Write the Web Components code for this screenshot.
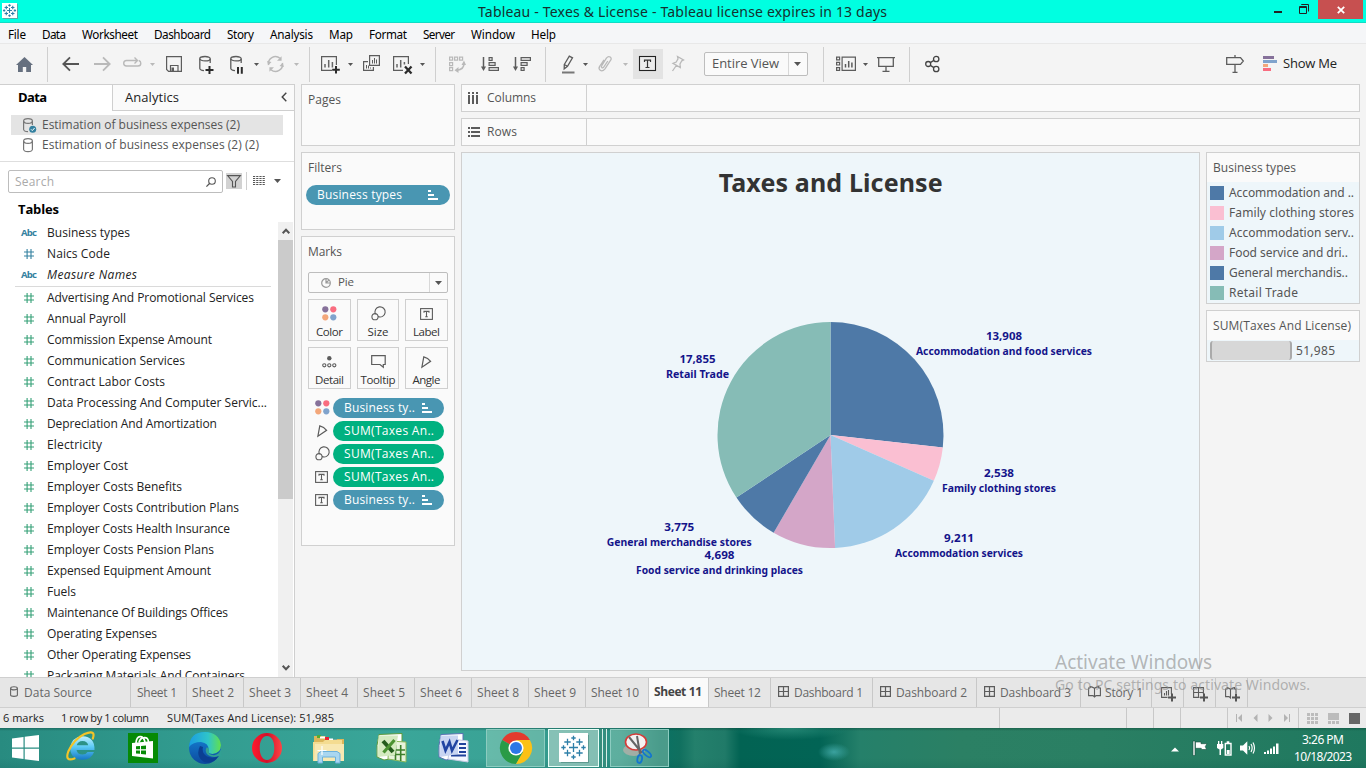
<!DOCTYPE html>
<html lang="en">
<head>
<meta charset="utf-8">
<title>Tableau - Texes &amp; License</title>
<style>
html,body{margin:0;padding:0;width:1366px;height:768px;overflow:hidden;background:#f4f4f4}
body{font-family:"Open Sans","Noto Sans",sans-serif;font-size:12px;color:#333}
</style>
</head>
<body>
<app-window></app-window>
<script>
function component(tag, css, render) {
  customElements.define(tag, class extends HTMLElement {
    connectedCallback() {
      if (this.shadowRoot) return;
      const root = this.attachShadow({mode: 'open'});
      const t = document.createElement('template');
      t.innerHTML = `<style>*{box-sizing:border-box}:host{display:block;box-sizing:border-box}${css}</style>${render(this)}`;
      root.appendChild(t.content.cloneNode(true));
    }
  });
}

/* Single line of text tracked to a given run length. */
customElements.define('ui-text', class extends HTMLElement {
  connectedCallback() {
    if (this.shadowRoot) return;
    const root = this.attachShadow({mode: 'open'});
    root.innerHTML = '<style>:host{display:inline-block;white-space:nowrap;flex:none;line-height:1.3}</style><slot></slot>';
    const w = +this.getAttribute('w'), s = this.getAttribute('s');
    if (s) this.style.fontSize = s + 'px';
    if (w) {
      const n = this.textContent.length, now = this.getBoundingClientRect().width;
      this.style.letterSpacing = ((w - now) / Math.max(1, n - 1)).toFixed(3) + 'px';
      this.style.width = w + 'px';
    }
  }
});
const T = (text, w, s = 12, extra = '') => `<ui-text w="${w}" s="${s}" style="${extra}">${text}</ui-text>`;

const dots = '<circle cx="3.3" cy="3.3" r="3.1" fill="#86719a"/><circle cx="11.3" cy="3.3" r="3.1" fill="#f96d80"/><circle cx="3.3" cy="11.3" r="3.1" fill="#f3a77a"/><circle cx="11.3" cy="11.3" r="3.1" fill="#80a3cc"/>';
const G = '#5c5c5c', L = '#b9b9b9';
const st = (c, w = 1.2) => `fill="none" stroke="${c}" stroke-width="${w}"`;
const cyl = (c) => `<g ${st(c, 1.3)}><ellipse cx="6" cy="4.7" rx="5.2" ry="2.2"/><path d="M.8 4.7V14.5Q1 16.3 5 16.6M11.2 4.7V9"/></g>`;
const logo = (c) => {
  const p = (x, y, r) => `M${x - r} ${y}H${x + r}M${x} ${y - r}V${y + r}`;
  return `<path fill="none" stroke="${c}" stroke-width="1" d="${p(13,13,4.5)}${p(13,3.5,2.2)}${p(13,22.5,2.2)}${p(3,13,2.2)}${p(23,13,2.2)}${p(7,7.5,3.2)}${p(19,7.5,3.2)}${p(7,18.5,3.2)}${p(19,18.5,3.2)}"/>`;
};
const ICONS = {
  home: [17,20,'<path fill="#66707f" d="M8.5 3L17 11H15V18H10.2V13H6.8V18H2V11H0Z"/>'],
  back: [17,20,`<path ${st('#555',1.8)} d="M17 10H1.5M8 3.3L1.3 10L8 16.7"/>`],
  fwd: [17,20,`<path ${st(L,1.8)} d="M0 10H15.5M9 3.3L15.7 10L9 16.7"/>`],
  loop: [19,20,`<path ${st(L,1.4)} d="M9 6.5H3.5Q.7 6.5 .7 9.2T3.5 12H15Q17.8 12 17.8 9.2Q17.8 7 15.8 6.5M9 6.5H14M11.5 3.5L14.5 6.5L11.5 9.5"/>`],
  caret: [5,20,'<path fill="#555" d="M0 9H5L2.5 12Z"/>'],
  caretL: [5,20,`<path fill="${L}" d="M0 9H5L2.5 12Z"/>`],
  save: [16,20,`<path ${st(G,1.2)} d="M.6 2.6H15.4V17.4H2.6L.6 15.4ZM4.5 17V11.5H12V17"/><path fill="${G}" d="M5.5 13.5h2.5v3.5H5.5z"/>`],
  cyladd: [15,20,cyl(G)+'<path stroke="#2b2b2b" stroke-width="2" d="M10.5 12V20M6.5 16H14.5"/>'],
  cylpause: [13,20,cyl(G)+'<path stroke="#2b2b2b" stroke-width="2" d="M8 13V19.7M11.8 13V19.7"/>'],
  refresh: [17,20,`<path ${st(L,1.5)} d="M1.6 11A7 7 0 0 1 13 4.3M15.4 9A7 7 0 0 1 4 15.7"/><path fill="${L}" d="M10 6.8H14.6V2.3ZM7 13.2H2.4V17.7ZM0 7L1.5 11L4.5 8ZM17 13L15.5 9L12.5 12Z"/>`],
  sheetadd: [19,20,`<path ${st(G)} d="M15.4 11V2.6H.6V16.4H11"/><path stroke="#666" stroke-width="1.5" d="M4 13.5V10M7.7 13.5V6M11.4 13.5V8"/><path stroke="#2b2b2b" stroke-width="2" d="M15 12V19.6M11.2 15.8H18.8"/>`],
  dup: [17,20,`<path ${st(G)} d="M6.6 1.6H16.4V11.4H6.6ZM5 7.6H.6V16.4H10.4V13"/><path stroke="${G}" d="M9.5 9.5V6M11.5 9.5V4M13.5 9.5V5.5M3.5 14.5V11M5.5 14.5V11.5M7.5 14.5V13.5"/>`],
  clear: [20,20,`<path ${st(G)} d="M15.4 10V2.6H.6V16.4H10"/><path stroke="#666" stroke-width="1.5" d="M4 13.5V10M7.7 13.5V6M11.4 10.5V8"/><path stroke="#2b2b2b" stroke-width="2.3" d="M12 12.5L18.5 19.5M18.5 12.5L12 19.5"/>`],
  swap: [17,20,`<path ${st(L)} d="M.6 3.1h3v3h-3zM5.6 3.1h3v3h-3zM10.6 3.1h3v3h-3zM.6 8.6h3v3h-3zM.6 13.6h3v3h-3z"/><path ${st(L,1.6)} d="M15 9.5Q15 15.5 8 16.2"/><path fill="${L}" d="M15 6.5L17 11H12.5ZM5.5 16.3L9.5 13V19Z"/>`],
  asc: [18,20,`<path stroke="${G}" stroke-width="1.5" d="M2.5 3V14"/><path fill="${G}" d="M0 12.5H5L2.5 17Z"/><path ${st(G)} d="M8.1 3.6h3v2.8h-3zM8.1 8.6h6v2.8h-6zM8.1 13.6h9.3v2.8H8.1z"/>`],
  desc: [18,20,`<path stroke="${G}" stroke-width="1.5" d="M2.5 3V14"/><path fill="${G}" d="M0 12.5H5L2.5 17Z"/><path ${st(G)} d="M8.1 3.6h9.3v2.8H8.1zM8.1 8.6h6v2.8h-6zM8.1 13.6h3v2.8h-3z"/>`],
  pen: [14,20,`<path ${st(G,1.3)} d="M3.3 10.5L8.3 2.2L11.5 3.8L6.5 12.3L3.2 14.8ZM3.3 10.5L6.5 12.3"/><path fill="#777" d="M1 17.5h12.5v2H1z"/>`],
  clip: [14,20,`<path ${st(L,1.3)} d="M9.8 7L5.7 13.2Q4.6 14.5 3.8 13.6T3.9 11.3L8.4 4.2Q10.3 1.7 12.2 3.1T12.3 6.6L7 14.8Q4.4 18 2.2 16.3T1.9 12L6 5.8"/>`],
  tbox: [30,30,'<path fill="#e3e3e3" d="M0 0h30v30H0z"/><rect x="6.5" y="7.5" width="16" height="14" fill="#ececec" stroke="#222" stroke-width="1.1"/><path fill="none" stroke="#333" stroke-width="1.2" d="M11.5 13V11.2H17.5V13M14.5 11.2V18.5M12.5 18.5H16.5"/>'],
  pin: [13,20,`<path ${st(L,1.3)} d="M6.5 2.5L12.5 6L10.8 6.8L9 10L9.3 13.5L2 9.3L5.2 8L7 4.8ZM5.3 11.5L1.5 17"/>`],
  cards: [20,20,`<path ${st(G)} d="M.6 3.1h3v2.7h-3zM.6 8.3h3v2.7h-3zM.6 13.6h3v2.7h-3zM6.1 3.1H19.4V16.4H6.1z"/><path stroke="${G}" stroke-width="1.5" d="M9.5 13.5V10M12.7 13.5V7M15.9 13.5V8.5"/>`],
  present: [18,20,`<path ${st(G,1.3)} d="M0 3.6H18M1.7 3.6V12.4H16.3V3.6M9 12.4V17.4M5.5 17.4H12.5"/>`],
  share: [15,20,`<g ${st('#444',1.3)}><circle cx="3.2" cy="10" r="2.5"/><circle cx="11.2" cy="5" r="2.7"/><circle cx="11.2" cy="15" r="2.7"/><path d="M5.3 8.6L8.9 6.4M5.3 11.4L8.9 13.6"/></g>`],
  sign: [18,20,`<path ${st(G,1.3)} d="M.7 3.7H14.5L17.3 7L14.5 10.3H.7ZM9 1V3.7M9 10.3V18.3M6.5 18.3H11.5"/>`],
  showme: [14,20,'<path fill="#86719a" d="M0 2h11v3H0z"/><path fill="#80a3cc" d="M0 6h14v3H0z"/><path fill="#f3a77a" d="M0 10h5v3H0z"/><path fill="#f96d80" d="M0 14h8v3H0z"/>'],
  cols: [11,12,`<path fill="${G}" d="M0 0h2v2H0zM4 0h2v2H4zM8 0h2v2H8zM0 3h2v9H0zM4 3h2v9H4zM8 3h2v9H8z"/>`],
  rows: [12,10,`<path fill="${G}" d="M0 0h2v2H0zM0 4h2v2H0zM0 8h2v2H0zM3 0h9v2H3zM3 4h9v2H3zM3 8h9v2H3z"/>`],
  db: [14,15,`<g ${st('#777')}><ellipse cx="5" cy="3" rx="4.4" ry="2.4"/><path d="M.6 3V11.5Q1 13.5 5 13.6Q9 13.5 9.4 11.5V3"/></g>`],
  dbok: [14,15,`<g ${st('#777')}><ellipse cx="5" cy="3" rx="4.4" ry="2.4"/><path d="M.6 3V11.5Q1 13.5 5 13.6M9.4 3V7"/></g><circle cx="9.7" cy="11.3" r="3.5" fill="#3481a0"/><path fill="none" stroke="#fff" d="M8 11.3L9.3 12.6L11.6 10"/>`],
  dbtab: [8,11,`<g ${st('#666',1.1)}><ellipse cx="4" cy="2.3" rx="3.4" ry="1.6"/><path d="M.6 2.3V9.2Q.8 10.4 4 10.4T7.4 9.2V2.3"/></g>`],
  glass: [10,10,`<circle cx="6" cy="4" r="3.3" ${st('#555',1.1)}/><path stroke="#555" stroke-width="1.3" d="M3.8 6.3L.4 9.6"/>`],
  funnel: [16,16,`<path fill="#d2d2d2" d="M0 0h16v16H0z"/><path ${st('#555',1.1)} d="M1.6 2.6H14.4L9.5 8.5V14H6.5V8.5Z"/>`],
  list: [12,10,'<path stroke="#555" stroke-dasharray="2.2 1" d="M0 .5H12M0 2.5H12M0 4.5H12M0 6.5H12M0 8.5H12" stroke-width="1"/>'],
  down7: [7,4,'<path fill="#555" d="M0 0H7L3.5 4Z"/>'],
  hashB: [10,10,`<path ${st('#3481a0',1.1)} d="M3.1 0V10M7 0V10M0 3H10M0 7H10"/>`],
  hashG: [10,10,`<path ${st('#35a077',1.1)} d="M3.1 0V10M7 0V10M0 3H10M0 7H10"/>`],
  sort: [10,10,'<path fill="#fff" d="M0 0h3v2H0zM0 4h6v2H0zM0 8h10v2H0z"/>'],
  pie: [10,10,'<g fill="none" stroke="#999" stroke-width="1.2"><circle cx="5" cy="5" r="4.3"/><path d="M5 1V5H9M5 5L7.8 2.2"/></g>'],
  color: [15,15,dots],
  size: [15,15,`<g ${st(G,1.1)}><path d="M4.5 8.2A5.1 5.1 0 1 1 7 10.6"/><circle cx="4" cy="10.7" r="3.1"/></g>`],
  label: [13,12,`<rect x=".6" y=".6" width="11.8" height="10.8" ${st(G,1.1)}/><path ${st(G,1.1)} d="M4 4.8V3.4H9V4.8M6.5 3.4V8.8M5.2 8.8H7.8"/>`],
  detail: [15,12,`<circle cx="7.3" cy="2.3" r="2.2" fill="${G}"/><g ${st(G,1.1)}><circle cx="2.3" cy="9.3" r="1.6"/><circle cx="7.3" cy="9.3" r="1.6"/><circle cx="12.3" cy="9.3" r="1.6"/></g>`],
  tip: [15,13,`<path ${st(G,1.2)} d="M.7.7H14.2V9.5H12.3V12.3L9 9.5H.7Z"/>`],
  angle: [11,12,`<path ${st(G,1.2)} d="M2.8.8Q7 1.8 9.6 5.3L.9 11.2Z"/>`],
  dash: [11,11,`<path ${st(G,1.2)} d="M.6.6H10.4V10.4H.6ZM5.5.6V10.4M.6 5.5H10.4"/>`],
  story: [13,12,`<path ${st(G,1.1)} d="M6.5 2.3Q4 .5 2.2.6V2M2.2 2H.6V9.6H5L6.5 11L8 9.6H12.4V2H10.8V.6Q9 .5 6.5 2.3V11"/>`],
  nsheet: [15,15,`<path ${st(G,1.1)} d="M10.4 7V.6H.6V10.4H6.5M3.5 8.5V6M5.5 8.5V4M7.5 8.5V3"/><path stroke="#555" stroke-width="2" d="M11 6.5V14.5M7 10.5H15"/>`],
  ndash: [15,15,`<path ${st(G,1.1)} d="M10.4 7V.6H.6V10.4H6.5M5.5.6V10.4M.6 5.5H10.4"/><path stroke="#555" stroke-width="2" d="M11 6.5V14.5M7 10.5H15"/>`],
  nstory: [15,15,`<path ${st(G,1.1)} d="M5.5 2.3Q3 .5 2.2.6V2M2.2 2H.6V9.6H4L5.5 11V2.3Q8 .5 9.6.6V2H11V6"/><path stroke="#555" stroke-width="2" d="M11 6.5V14.5M7 10.5H15"/>`],
  left: [6,10,`<path ${st('#444',1.4)} d="M5.3 .8L1.2 5L5.3 9.2"/>`],
  up: [8,6,`<path ${st('#555',2)} d="M.7 5.2L4 1.7L7.3 5.2"/>`],
  dn: [8,6,`<path ${st('#555',2)} d="M.7 .8L4 4.3L7.3 .8"/>`],
  first: [8,8,'<path fill="#b3b3b3" d="M1 0H2V8H1zM7 0V8L3 4Z"/>'],
  prev: [5,8,'<path fill="#b3b3b3" d="M4.5 0V8L.5 4Z"/>'],
  next: [5,8,'<path fill="#b3b3b3" d="M.5 0V8L4.5 4Z"/>'],
  last: [8,8,'<path fill="#b3b3b3" d="M6 0H7V8H6zM1 0V8L5 4Z"/>'],
  g9: [11,11,'<path fill="#bcbcbc" d="M0 0h3v3H0zM4 0h3v3H4zM8 0h3v3H8zM0 4h3v3H0zM4 4h3v3H4zM8 4h3v3H8zM0 8h3v3H0zM4 8h3v3H4zM8 8h3v3H8z"/>'],
  g1: [11,11,'<path fill="#bcbcbc" d="M0 0h11v7H0zM0 8h3v3H0zM4 8h3v3H4zM8 8h3v3H8z"/>'],
  sq: [11,11,'<path fill="#666" d="M0 0h11v11H0z"/>'],
  applogo: [16,16,`<path fill="#5aa" d="M1 1h15v15H1z"/><path fill="#fff" d="M0 0h15v15H0z"/><g transform="translate(.5 .5) scale(.54)">${logo('#2e7fa8').replace('stroke-width="1"','stroke-width="2"')}</g>`],
  min: [8,12,'<path fill="#222" d="M0 8h8v2H0z"/>'],
  max: [11,12,'<path fill="none" stroke="#222" d="M2.5 1V1.5H9.5V8.5M.5 3.5H7.5V10.5H.5ZM.5 4.5H7.5"/>'],
  close: [8,8,'<path stroke="#fff" stroke-width="1.8" d="M.8.8L7.2 7.2M7.2.8L.8 7.2"/>'],
  win: [27,27,'<path fill="#fff" d="M0 3.6L11.5 2V12.6H0ZM12.7 1.8L27 0V12.6H12.7ZM0 13.8H11.5V24L0 22.5ZM12.7 13.8H27V26L12.7 24.2Z"/>'],
  ie: [30,30,'<defs><linearGradient id="a" y2="1" x2="0"><stop stop-color="#c3f1ff"/><stop offset=".45" stop-color="#5ccbf5"/><stop offset="1" stop-color="#1678c6"/></linearGradient></defs><path fill="url(#a)" fill-rule="evenodd" d="M28.5 19H10.5Q11.5 23.5 16.5 23.5Q20 23.5 21.5 21H28Q25.5 28.7 16.5 28.7Q4.3 28.2 4.2 17Q5 6.2 16.5 5.2Q29 5.8 28.5 19ZM10.7 14.3H22.2Q21.5 10.2 16.5 10Q11.8 10.2 10.7 14.3Z"/><path fill="none" stroke="#f3c428" stroke-width="2.2" stroke-linecap="round" d="M8.5 27.5Q-1.5 31 2.3 20.5Q7.5 8.5 18.5 3Q26.5 -.5 27.5 3.2Q27.8 5 26.8 7.5"/>'],
  store: [30,30,'<path fill="#068a06" d="M0 0h30v30H0z"/><path fill="#fff" d="M4 10L25 8V25.5L4 23Z"/><path fill="none" stroke="#fff" stroke-width="1.7" d="M8 10Q8.5 4 12 3.7T17 9M11 9.5Q12 5 16 4.7Q20 4 20.5 9"/><path fill="#068a06" d="M8 13.3L12 13V16.3H8ZM13 12.9L18 12.5V16.3H13ZM8 17.4H12V20.8L8 20.4ZM13 17.4H18V21.5L13 20.9Z"/>'],
  edge: [32,32,'<defs><linearGradient id="e1"><stop stop-color="#1b9de2"/><stop offset=".6" stop-color="#2fc5c9"/><stop offset="1" stop-color="#62e04d"/></linearGradient><linearGradient id="e2" x2="0" y2="1"><stop stop-color="#1687d9"/><stop offset="1" stop-color="#0c4a9e"/></linearGradient></defs><circle cx="16" cy="16" r="16" fill="url(#e2)"/><path fill="url(#e1)" d="M0 15Q1 0 16 0Q30 .5 32 13Q32 21 23.5 22Q18 21.5 19.5 18Q20 11 12 10Q4 10 0 15Z"/><path fill="#0b3f92" d="M11 14Q6 24 15 30Q24 33 29.5 24Q24 27 18 24.5Q12.5 21 14 15Z"/><path fill="#31a093" d="M20 18.5Q19 23 25 23.2Q30 22.5 31.8 17.5L33 25L29.5 24Q24 26.3 19 23Q15.5 20 17.5 15.5Q20 15 20 18.5Z"/>'],
  opera: [30,30,'<defs><linearGradient id="o"><stop stop-color="#ff1b2d"/><stop offset=".5" stop-color="#d3102a"/><stop offset="1" stop-color="#f44"/></linearGradient></defs><path fill="url(#o)" fill-rule="evenodd" d="M15 0A15 15 0 1 0 15 30A15 15 0 1 0 15 0ZM15 3C20 3 22.3 9 22.3 15S20 27 15 27S7.7 21 7.7 15S10 3 15 3Z"/>'],
  folder: [32,30,'<path fill="#dcb65a" d="M1 3h11l2 3h17v22H1z"/><path fill="#5a3" d="M4 2h4v3H4z"/><path fill="#fff" d="M7 3.5h5v2H7zM15 5.5h5v2h-5zM22 8h6v2h-6z"/><path fill="#e23" d="M12 4h4v3h-4z"/><path fill="#29d" d="M20 6.5h4v3h-4z"/><path fill="#f4dc91" d="M0 9H10L12 7H29V28H0Z"/><path fill="#f8e8b2" d="M2 11H31V28H1Z"/><path fill="#a9d6f0" stroke="#6bb1dc" d="M5 30V20.5L8 18.5H24L27 20.5V30H22.5V24H9.5V30Z"/><path stroke="#fff" stroke-width="1.2" d="M9 13V22M4.5 17.5H13.5"/>'],
  excel: [31,30,'<path fill="#fff" stroke="#5c9b3b" d="M3 1.5L26 .5V24L8 27L1 24Q0 12 3 1.5Z"/><path fill="#e8f3dc" stroke="#88b857" d="M13 8L30 9V29L12 26Z"/><path stroke="#3d7f2a" stroke-width="1.6" d="M14 17H29M14 21.5H29M19.5 12V27M24.7 12V28"/><path fill="#d4eac0" d="M2.5 2.5H22L19 22L2 24Z"/><path fill="none" stroke="#245b1c" stroke-width="4" d="M7 8L17 19"/><path fill="none" stroke="#4c9232" stroke-width="3.2" d="M18.5 7L7.5 19.5"/>'],
  word: [31,30,'<path fill="#fff" stroke="#5871b5" d="M3 1.5L25 .5V24L8 27L1 24Q0 12 3 1.5Z"/><path fill="#f4f7ff" stroke="#c3cbe2" d="M13 6L30 8V29L10 26Z"/><path stroke="#21439c" stroke-width="1.8" d="M21 11H28M21 15H28M21 19H28M13 22.5H28"/><path fill="#c8d5f2" d="M2.5 2.5H20V21L2 24Z"/><path fill="none" stroke="#2144a2" stroke-width="2.6" d="M4.5 8L7.5 17.5L11.5 9L14 17.5L19.5 7"/>'],
  chrome: [32,32,'<path fill="#e33b2e" d="M16 16L2.1 8A16 16 0 0 1 29.9 8Z"/><path fill="#2a9b47" d="M16 16L2.1 8A16 16 0 0 0 16 32L23 20Z"/><path fill="#fbc116" d="M16 8H29.9A16 16 0 0 1 16 32L23 20Z"/><circle cx="16" cy="16" r="7.6" fill="#fff"/><circle cx="16" cy="16" r="6" fill="#2d78e6"/>'],
  tableau: [30,30,`<path fill="#36756c" opacity=".5" d="M2 2h28v28H2z"/><path fill="#fff" d="M0 0h29v29H0z"/><g transform="translate(1.5 1.5)">${logo('#2e7fa8').replace('stroke-width="1"','stroke-width="1.3"')}</g>`],
  snip: [30,31,'<ellipse cx="11" cy="17" rx="11" ry="6" fill="#b9b0aa" opacity=".75"/><ellipse cx="13" cy="9" rx="10.5" ry="8" fill="#f4f2f2" stroke="#d63b38" stroke-width="1.6"/><path stroke="#666" stroke-width="2" d="M6 4L19 20M14 3L17 21"/><ellipse cx="16.7" cy="26" rx="2.3" ry="4" transform="rotate(10 16.7 26)" fill="none" stroke="#1475cf" stroke-width="1.8"/><ellipse cx="24" cy="20.5" rx="2.2" ry="5" transform="rotate(-50 24 20.5)" fill="none" stroke="#1475cf" stroke-width="1.8"/>'],
  trayup: [8,16,'<path fill="#fff" d="M0 10.5L4 6.5L8 10.5Z"/>'],
  flag: [16,16,'<path fill="#fff" stroke="#174b3d" stroke-width=".6" d="M1 1h2v14.5H1zM3.4 2H9V3.7H15L13.3 6.5L14.5 9.5H9.3V8.3H3.4Z"/>'],
  power: [15,16,'<path fill="none" stroke="#fff" stroke-width="1.4" d="M8.3 3.5H14V15H8.3ZM9.7 2H12.3"/><path fill="#fff" d="M9.7 10h3v4h-3zM1 1h1.3v3H1zM4 1h1.3v3H4zM0 4h6.3v4L4 9.5V15H2.5V9.5L0 8z"/>'],
  vol: [15,16,'<path fill="#fff" d="M0 5.5H3L7.3 1.2V14.8L3 10.5H0Z"/><path fill="none" stroke="#fff" stroke-width="1.2" d="M9 6Q10.3 8 9 10M11 4Q13.3 8 11 12M13 2.5Q16 8 13 13.5"/>'],
  net: [16,16,'<path fill="#fff" d="M0 12h2v2H0zM3 10.5h2V14H3zM6 8.5h2V14H6zM9 6.5h2V14H9zM12 3.5h2.5V14H12z"/>']
};
component('ui-icon', ':host{display:inline-block;flex:none;line-height:0}svg{display:block;overflow:visible}', el => {
  const [w, h, body] = ICONS[el.getAttribute('name')];
  return `<svg width="${w}" height="${h}" viewBox="0 0 ${w} ${h}">${body}</svg>`;
});
const I = (name, extra = '') => `<ui-icon name="${name}" style="${extra}"></ui-icon>`;

component('title-bar', `
:host{height:23px;background:#00ffe1;border-bottom:1px solid #10dcc4;display:flex;font-family:"Noto Sans","Open Sans",sans-serif;color:#14322f}
.l{width:478px;padding:3px 0 0 2px}.c{padding-top:2px}.r{margin-left:auto;display:flex}
.x{width:45px;height:19px;background:#c75050;margin-left:8px;margin-right:3px;display:flex;align-items:center;justify-content:center}`,
() => `<div class="l">${I('applogo')}</div><div class="c">${T('Tableau - Texes &amp; License - Tableau license expires in 13 days',409,14,'line-height:19px')}</div>
<div class="r">${I('min','margin:3px 17px 0 0')}${I('max','margin-top:3px')}<div class="x">${I('close')}</div></div>`);

component('menu-bar', `:host{height:21px;background:#f5f6f8;border-bottom:1px solid #e8e8e8;display:flex;padding-left:8px;font-family:"Noto Sans",sans-serif;color:#000}ui-text{line-height:22px!important}`,
() => [['File',18,16],['Data',24,16],['Worksheet',56,16],['Dashboard',57,16],['Story',27,16],['Analysis',43,16],['Map',24,16],['Format',38,16],['Server',32,16],['Window',44,16],['Help',25,0]].map(([t,w,g]) => T(t,w,11.7,`margin-right:${g}px`)).join(''));

component('tool-bar', `
:host{height:40px;display:flex;align-items:center;background:#f4f4f4}
i{width:1px;height:35px;background:#cfcfcf}
.sel{width:104px;height:24px;border:1px solid #bdbdbd;border-radius:2px;background:#fafafa;display:flex;align-items:center;color:#555}
.sel ui-text{margin-left:7px}.sel b{width:19px;height:22px;margin-left:auto;border-left:1px solid #d8d8d8;display:flex;align-items:center;padding-left:5px}`,
() => [[16,'home'],[14],[14,'back'],[15,'fwd'],[12,'loop'],[8,'caretL'],[11,'save'],[17,'cyladd'],[16,'cylpause'],[11,'caret'],[8,'refresh'],[10,'caretL'],[10],
[11,'sheetadd'],[8,'caret'],[10,'dup'],[13,'clear'],[7,'caret'],[10],[13,'swap'],[15,'asc'],[14,'desc'],[14],[15,'pen'],[8,'caret'],[10,'clip'],[11,'caretL'],[5,'tbox'],[8,'pin'],[20,'SEL'],[15],[12,'cards'],[7,'caret'],[9,'present'],[14],[15,'share']]
.map(([g,n]) => n === 'SEL' ? `<div class="sel" style="margin-left:${g}px;margin-top:-1px">${T('Entire View',67,13)}<b>${I('down7')}</b></div>` : n ? I(n,`margin-left:${g}px`) : `<i style="margin-left:${g}px"></i>`).join('')
+ I('sign','margin-left:auto') + I('showme','margin-left:19px') + T('Show Me',54,13,'margin:0 29px 1px 6px;color:#222'));

component('field-row', `:host{height:21px;display:flex;align-items:center;color:#222}.k{width:28px;margin-left:1px;display:flex;align-items:center}`,
el => { const k = el.getAttribute('kind');
  return `<div class="k">${k === 'abc' ? T('Abc',16,9.5,'font-weight:700;color:#3481a0;margin:2px 0 0 2px') : I(k === 'b' ? 'hashB' : 'hashG','margin-left:5px')}</div>${T(el.getAttribute('label'),el.getAttribute('tw'),12,'margin-top:1px;'+(el.hasAttribute('it')?'font-style:italic':''))}`; });

component('data-pane', `
:host{width:295px;height:593px;background:#fff;border-right:1px solid #cfcfcf;border-top:1px solid #cfcfcf;display:flex;flex-direction:column;color:#222;overflow:hidden}
.tabs{display:flex;height:26px}.a{width:112px;padding:4px 0 0 18px;color:#000;font-weight:700}
.b{flex:1;border-left:1px solid #cfcfcf;border-bottom:1px solid #cfcfcf;background:#fafafa;display:flex;padding:4px 7px 0 12px}
.src{padding:4px 0 5px;height:51px;border-bottom:1px solid #dedede}.s{height:20px;width:272px;margin-left:11px;display:flex;align-items:center;padding-left:12px;color:#555}
.s.on{background:#e4e4e4}.s ui-icon{margin-right:5px}
.find{display:flex;padding:8px 0 0 8px;height:31px;align-items:flex-start}
.box{width:215px;height:23px;border:1px solid #bdbdbd;border-radius:2px;display:flex;align-items:center;padding:0 6px;color:#aaa}
.find i{width:1px;height:18px;background:#cfcfcf;margin:2px 6px 0 4px}
h2{margin:0;height:29px;padding:7px 0 0 18px;font-size:13px;color:#000}
.body{display:flex;flex:1;min-height:0}.rows{flex:1;padding-left:18px;padding-top:0;overflow:hidden}
.line{height:1px;background:#dadada;margin:1px 7px 0 -3px}
.bar{width:15px;background:#f0f0f0;display:flex;flex-direction:column;align-items:center;justify-content:space-between;margin-right:1px}
.bar ui-icon{margin:6px 0}.bar .sp{flex:1;width:15px}.thumb{height:259px;background:#cbcbcb}`,
() => { const F = (k,l,w,x='') => `<field-row kind="${k}" label="${l}" tw="${w}" ${x}></field-row>`;
return `<div class="tabs"><div class="a">${T('Data',29,13)}</div><div class="b">${T('Analytics',54,13)}${I('left','margin:3px 0 0 auto')}</div></div>
<div class="src"><div class="s on">${I('dbok')}${T('Estimation of business expenses (2)',198)}</div><div class="s">${I('db')}${T('Estimation of business expenses (2) (2)',217)}</div></div>
<div class="find"><div class="box">${T('Search',39)}${I('glass','margin-left:auto')}</div>${I('funnel','margin:3px 0 0 3px')}<i></i>${I('list','margin-top:6px')}${I('down7','margin:9px 0 0 9px')}</div>
<h2>${T('Tables',41,13)}</h2>
<div class="body"><div class="rows">${F('abc','Business types',83)}${F('b','Naics Code',63)}${F('abc','Measure Names',90,'it')}<div class="line"></div>`+
[['Advertising And Promotional Services',207],['Annual Payroll',79],['Commission Expense Amount',165],['Communication Services',138],['Contract Labor Costs',118],['Data Processing And Computer Servic...',220],['Depreciation And Amortization',170],['Electricity',55],['Employer Cost',81],['Employer Costs Benefits',135],['Employer Costs Contribution Plans',192],['Employer Costs Health Insurance',183],['Employer Costs Pension Plans',167],['Expensed Equipment Amount',164],['Fuels',29],['Maintenance Of Buildings Offices',181],['Operating Expenses',110],['Other Operating Expenses',144],['Packaging Materials And Containers',198]].map(a => F('g',...a)).join('')+
`</div><div class="bar">${I('up')}<div class="sp"><div class="thumb"></div></div>${I('dn')}</div></div>`; });

component('shelf-card', `:host{border:1px solid #d0d0d0;background:#fafafa;color:#555;display:block}.h{padding:6px 0 0 6px;height:32px}`,
el => `<div class="h">${T(el.getAttribute('label'),el.getAttribute('tw'))}</div><slot></slot>`);

component('field-pill', `:host{height:20px;border-radius:10px;display:flex;align-items:center;color:#fff;padding:0 11px;background:#4996b2}:host([green]){background:#00b180}ui-icon{margin:0 1px 0 auto}`,
el => T(el.getAttribute('label'),el.getAttribute('tw')) + (el.hasAttribute('green') ? '' : I('sort')));

component('mark-button', `:host{height:42px;border:1px solid #cfcfcf;background:#fafafa;display:flex;flex-direction:column;align-items:center;color:#333}.i{height:25px;display:flex;align-items:center;padding-top:2px}ui-text{line-height:13px!important}`,
el => `<div class="i">${I(el.getAttribute('icon'))}</div>${T(el.getAttribute('label'),el.getAttribute('tw'),11.5)}`);

component('shelves-column', `
:host{width:154px;display:flex;flex-direction:column;gap:6px}
.type{height:21px;width:140px;margin-left:6px;margin-top:3px;border:1px solid #bdbdbd;border-radius:2px;display:flex;align-items:center;padding-left:12px}
.type b{margin-left:auto;width:18px;height:19px;border-left:1px solid #d8d8d8;display:flex;align-items:center;padding-left:5px}
.grid{display:grid;grid-template-columns:43px 42px 43px;gap:6px;margin:6px 6px 7px}
.p{display:flex;align-items:center;height:23px;padding-left:12px}.p .ic{width:19px;display:flex;justify-content:flex-start;align-items:center}field-pill{width:111px}`,
() => { const P = (ic,l,w,g='') => `<div class="p"><div class="ic">${I(ic, ic==='angle'?'margin-left:3px':'margin-left:1px')}</div><field-pill label="${l}" tw="${w}" ${g}></field-pill></div>`;
const B = (ic,l,w) => `<mark-button icon="${ic}" label="${l}" tw="${w}"></mark-button>`;
return `<shelf-card label="Pages" tw="33" style="height:62px"></shelf-card>
<shelf-card label="Filters" tw="34" style="height:78px"><field-pill label="Business types" tw="85" style="width:144px;margin-left:4px"></field-pill></shelf-card>
<shelf-card label="Marks" tw="34" style="height:310px"><div class="type">${I('pie')}${T('Pie',16,11.5,'margin-left:7px')}<b>${I('down7')}</b></div>
<div class="grid">${B('color','Color',27)}${B('size','Size',21)}${B('label','Label',27)}${B('detail','Detail',29)}${B('tip','Tooltip',35)}${B('angle','Angle',28)}</div>
${P('color','Business ty..',71)}${P('angle','SUM(Taxes An..',90,'green')}${P('size','SUM(Taxes An..',90,'green')}${P('label','SUM(Taxes An..',90,'green')}${P('label','Business ty..',71)}</shelf-card>`; });

component('axis-shelf', `:host{height:28px;border:1px solid #d0d0d0;background:#fafafa;color:#555}.n{width:125px;height:26px;border-right:1px solid #d0d0d0;display:flex;align-items:center;padding-left:6px}`,
el => `<div class="n">${I(el.getAttribute('icon'))}${T(el.getAttribute('label'),el.getAttribute('tw'),12,'margin-left:'+(el.getAttribute('icon')==='cols'?8:7)+'px')}</div>`);

component('pie-view', `:host{width:739px;height:519px;border:1px solid #d0d0d0;background:#eef6fa}svg{display:block;font-family:"Noto Sans",sans-serif;font-weight:700;font-size:11px;fill:#14148a}`,
() => { const cx = 368.5, cy = 282, r = 113, data = [[13908,'#4e79a7'],[2538,'#fabfd2'],[9211,'#a0cbe8'],[4698,'#d4a6c8'],[3775,'#4e79a7'],[17855,'#86bcb6']];
const sum = 51985; let a = 0, s = '';
for (const [v,c] of data) { const b = a + v / sum * 2 * Math.PI; const p = t => (cx + r*Math.sin(t)).toFixed(2) + ' ' + (cy - r*Math.cos(t)).toFixed(2);
  s += `<path fill="${c}" d="M${cx} ${cy}L${p(a)}A${r} ${r} 0 ${b-a>Math.PI?1:0} 1 ${p(b)}Z"/>`; a = b; }
const lab = (x,y,v,vw,n,nw) => `<text text-anchor="middle" x="${x-462}" y="${y+3-153}" textLength="${vw}" lengthAdjust="spacingAndGlyphs">${v}</text><text text-anchor="middle" x="${x-462}" y="${y+18-153}" textLength="${nw}" lengthAdjust="spacingAndGlyphs">${n}</text>`;
return `<svg width="737" height="517">${s}<text x="368.7" y="39" text-anchor="middle" font-size="25" textLength="224" style="fill:#333">Taxes and License</text>
${lab(1004,336.5,'13,908',36,'Accommodation and food services',176)}${lab(697.5,359.5,'17,855',36,'Retail Trade',63)}${lab(999,473.5,'2,538',30,'Family clothing stores',114)}${lab(959,538.5,'9,211',30,'Accommodation services',128)}${lab(679.3,527.5,'3,775',30,'General merchandise stores',145)}${lab(719.5,555.5,'4,698',30,'Food service and drinking places',167)}</svg>`; });

component('legend-column', `
:host{width:154px;display:flex;flex-direction:column;gap:6px}
.c{border:1px solid #d0d0d0;background:#fafafa;color:#555}.h{height:29px;padding:6px 0 0 6px}
.items{background:#eef6fa;padding:1px 0 0 3px;font-family:"Noto Sans",sans-serif}.r{height:20px;display:flex;align-items:center}.r b{width:14px;height:14px;margin-right:5px}
.v{height:21px;background:#eef6fa;display:flex;align-items:center;padding-left:3px;font-family:"Noto Sans",sans-serif}
.v b{width:82px;height:19px;background:#d7d7d7;border:solid #aaa;border-width:0 2px;border-radius:3px;margin-right:4px}`,
() => `<div class="c" style="height:152px"><div class="h">${T('Business types',83)}</div><div class="items">`+
[['#4e79a7','Accommodation and ..',125],['#fabfd2','Family clothing stores',125],['#a0cbe8','Accommodation serv..',125],['#d4a6c8','Food service and dri..',119],['#4e79a7','General merchandis..',119],['#86bcb6','Retail Trade',69]].map(([c,t,w]) => `<div class="r"><b style="background:${c}"></b>${T(t,w)}</div>`).join('')+
`</div></div><div class="c" style="height:52px"><div class="h">${T('SUM(Taxes And License)',138)}</div><div class="v"><b></b>${T('51,985',39)}</div></div>`);

component('work-area', `
:host{height:593px;display:flex}shelves-column{margin-left:6px}
.m{margin-left:6px;width:899px;display:flex;flex-direction:column;gap:6px}.v{display:flex;gap:6px;align-items:flex-start}`,
() => `<data-pane></data-pane><shelves-column></shelves-column><div class="m"><axis-shelf icon="cols" label="Columns" tw="49"></axis-shelf><axis-shelf icon="rows" label="Rows" tw="30"></axis-shelf><div class="v"><pie-view></pie-view><legend-column></legend-column></div></div>`);

component('sheet-tabs', `
:host{height:31px;border-top:1px solid #cfcfcf;border-bottom:1px solid #cfcfcf;background:#e6e6e6;display:flex;color:#666}
.t{border-right:1px solid #c8c8c8;display:flex;align-items:center;height:29px;padding-top:1px}.t.on{background:#fafafa;font-weight:700;color:#444;padding:0 0 1px}`,
() => [['Data Source',131,10,68,'dbtab',6],['Sheet 1',56,6,40],['Sheet 2',57,5,42],['Sheet 3',57,5,42],['Sheet 4',57,5,42],['Sheet 5',57,5,42],['Sheet 6',57,5,42],['Sheet 8',57,5,42],['Sheet 9',57,5,42],['Sheet 10',63,5,48],['Sheet 11',60,5,48],['Sheet 12',62,5,47],['Dashboard 1',102,7,69,'dash',5],['Dashboard 2',104,7,71,'dash',5],['Dashboard 3',104,7,71,'dash',5],['Story 1',71,7,38,'story',4],['',32,9,0,'nsheet'],['',32,9,0,'ndash'],['',32,9,0,'nstory']]
.map(([t,w,p,tw,ic,g=0]) => `<div class="t ${t==='Sheet 11'?'on':''}" style="width:${w}px;padding-left:${p}px">${ic?I(ic,`margin-right:${g}px;margin-${t?'bottom:3':'top:2'}px`):''}${t?T(t,tw):''}</div>`).join(''));

component('status-bar', `:host{height:20px;background:#ebebeb;display:flex;color:#222}.x{height:20px;border-left:1px solid #c8c8c8;display:flex;align-items:center}ui-text{line-height:20px!important}`,
() => `${T('6 marks',41,11,'margin-left:3px')}${T('1 row by 1 column',88,11,'margin-left:17px')}${T('SUM(Taxes And License): 51,985',167,11,'margin-left:18px')}
<div class="x" style="width:127px;margin-left:auto"></div><div class="x" style="width:27px"></div><div class="x" style="width:27px"></div><div class="x" style="width:47px"></div>
<div class="x" style="width:71px;padding-left:7px;gap:10px">${I('first')}${I('prev')}${I('next')}${I('last')}</div><div class="x" style="width:68px;padding-left:8px;gap:10px">${I('g9')}${I('g1')}${I('sq')}</div>`);

component('task-bar', `
:host{height:40px;display:flex;align-items:center;color:#fff;font-family:"Noto Sans",sans-serif;
background:radial-gradient(ellipse 16px 9px at 834px 24px,rgba(70,175,175,.8),transparent),radial-gradient(ellipse 60px 12px at 790px 0,rgba(50,150,130,.7),transparent),linear-gradient(180deg,rgba(0,40,30,.3) 0,transparent 3px,transparent 75%,rgba(0,60,60,.12)),linear-gradient(90deg,#288b80 0,#329c90 200px,#3aa699 400px,#3aa396 490px,#2b9083 620px,#0a7163 660px,#10705f 680px,#24806c 695px,#207a68 725px,#026353 740px,#026455 820px,#25806a 860px,#2b8064 960px,#2a7f63 1100px,#1f785f 1366px)}
.b{height:38px;border:1px solid #8cccc0;background:rgba(170,220,200,.4);display:flex;align-items:center;justify-content:center}
.tb{background:rgba(190,220,210,.6);border-color:#e8fff8}.st{width:3px;height:38px;border-right:1px solid #d7eee8;margin-right:1px;background:#388c7c}
.clock{display:flex;flex-direction:column;align-items:center;width:60px;margin:0 13px}.clock ui-text{line-height:17px}`,
() => `${I('win','margin-left:12px')}${I('ie','margin-left:27px;margin-bottom:4px')}${I('store','margin-left:32px')}${I('edge','margin-left:31px')}${I('opera','margin-left:31px')}${I('folder','margin-left:31px')}${I('excel','margin-left:31px')}${I('word','margin-left:31px')}
<div class="b" style="width:59px;margin-left:17px">${I('chrome')}</div><div class="b tb" style="width:51px;margin-left:3px">${I('tableau')}</div><div class="st" style="margin-left:1px"></div><div class="st"></div><div class="b" style="width:59px;margin-left:2px;padding-right:3px">${I('snip')}</div>
${I('trayup','margin:2px 0 0 auto')}${I('flag','margin-left:13px')}${I('power','margin-left:9px')}${I('vol','margin-left:8px')}${I('net','margin-left:9px')}
<div class="clock">${T('3:26 PM',42,12)}${T('10/18/2023',58,12)}</div>`);

component('activation-notice', `:host{position:absolute;left:1055px;top:649px;color:rgba(140,140,140,.62);font-family:"Noto Sans",sans-serif;pointer-events:none;display:flex;flex-direction:column;align-items:flex-start}`,
() => T('Activate Windows',157,19,'line-height:26px') + T('Go to PC settings to activate Windows.',255,14,'line-height:20px'));

component('app-window', `:host{width:1366px;height:768px;display:flex;flex-direction:column;position:relative;overflow:hidden;background:#f4f4f4}title-bar,menu-bar,tool-bar,work-area,sheet-tabs,status-bar,task-bar{flex:none}`,
() => `<title-bar></title-bar><menu-bar></menu-bar><tool-bar></tool-bar><work-area></work-area><sheet-tabs></sheet-tabs><status-bar></status-bar><task-bar></task-bar><activation-notice></activation-notice>`);
</script>
</body>
</html>
